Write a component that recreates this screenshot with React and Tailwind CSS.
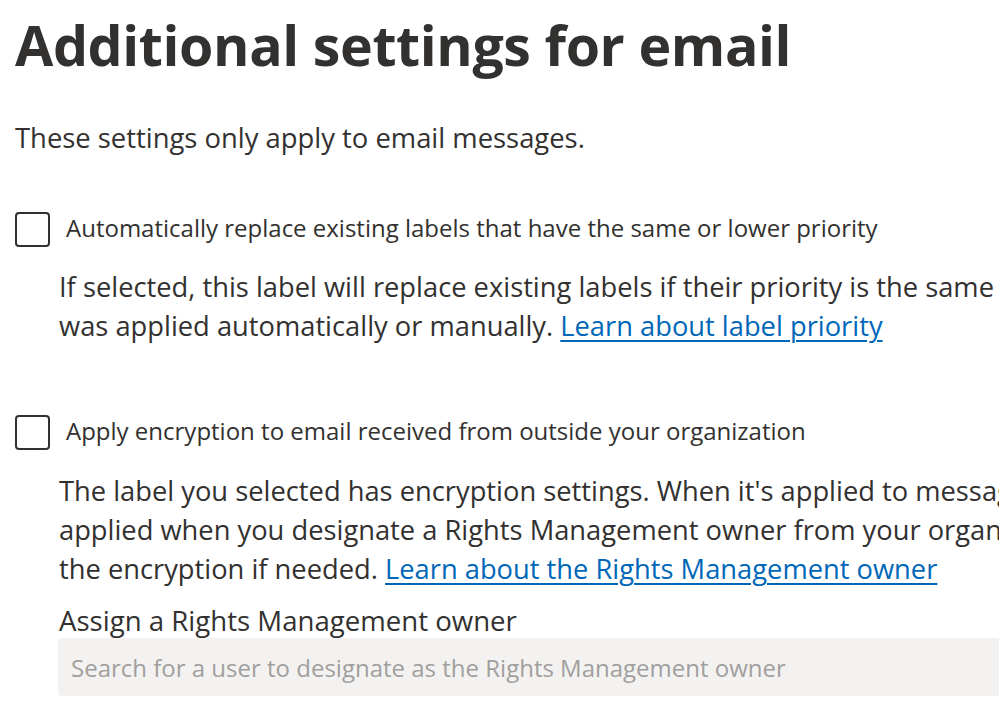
export default function App() {
  const font = { fontFamily: '"Open Sans", "Noto Sans", sans-serif' };
  return (
    <div className="w-[999px] h-[716px] overflow-hidden bg-white text-[#323130]" style={font}>
      <div className="w-[1500px] pl-[15px] pt-[10px]">
        <h1 className="text-[55.5px] font-bold leading-[70px] tracking-[-0.4px] whitespace-nowrap">Additional settings for email</h1>
        <p className="mt-[40px] text-[27.4px] leading-[36px] whitespace-nowrap">These settings only apply to email messages.</p>

        <div className="mt-[56px] flex items-center gap-[16px]">
          <div className="w-[35px] h-[35px] border-2 border-[#323130] rounded-[4px] shrink-0" />
          <span className="text-[24px] leading-[32px] -mt-[3px] whitespace-nowrap">Automatically replace existing labels that have the same or lower priority</span>
        </div>
        <div className="pl-[44px] mt-[20px] text-[27.3px] leading-[39px] whitespace-nowrap">
          <div>If selected, this label will replace existing labels if their priority is the same or lower, regardless of whether the existing label</div>
          <div>
            was applied automatically or manually.{" "}
            <a href="#" className="text-[#0067b8] underline underline-offset-[4px] decoration-[1.5px]">Learn about label priority</a>
          </div>
        </div>

        <div className="mt-[70px] flex items-center gap-[16px]">
          <div className="w-[35px] h-[35px] border-2 border-[#323130] rounded-[4px] shrink-0" />
          <span className="text-[24px] leading-[32px] -mt-[3px] whitespace-nowrap">Apply encryption to email received from outside your organization</span>
        </div>
        <div className="pl-[44px] mt-[21px] text-[27.3px] leading-[39px] whitespace-nowrap">
          <div>The label you selected has encryption settings. When it's applied to messages sent from outside your organization, the encryption is</div>
          <div>applied when you designate a Rights Management owner from your organization. This owner has full control to change or remove</div>
          <div>
            the encryption if needed.{" "}
            <a href="#" className="text-[#0067b8] underline underline-offset-[4px] decoration-[1.5px]">Learn about the Rights Management owner</a>
          </div>
          <div className="mt-[14px] text-[27.6px] leading-[36px]">Assign a Rights Management owner</div>
          <div className="-ml-px w-[1200px] h-[58px] bg-[#f3f2f1] rounded-[4px] flex items-center pl-[13px] text-[24px] text-[#a19f9d]">
            Search for a user to designate as the Rights Management owner
          </div>
        </div>
      </div>
    </div>
  );
}
